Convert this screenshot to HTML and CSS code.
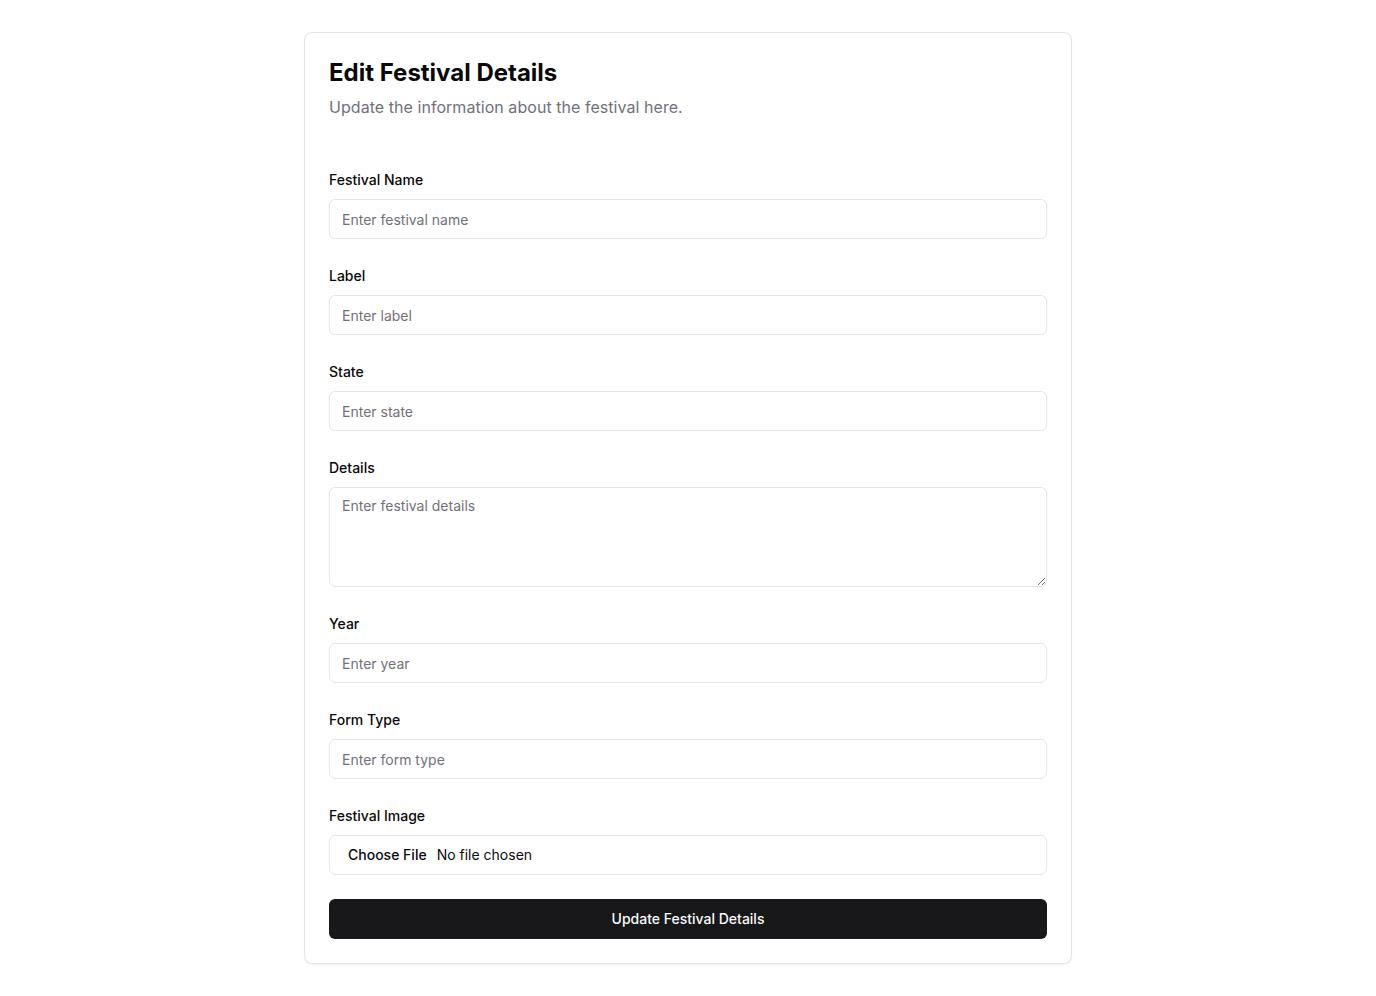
FILE: index.html
```html
<!DOCTYPE html>
<html lang="en">
<head>
<meta charset="utf-8">
<title>Edit Festival Details</title>
<link rel="stylesheet" href="styles.css">
</head>
<body>
<main class="page">
  <section class="card">
    <header class="card-header">
      <h1 class="card-title">Edit Festival Details</h1>
      <p class="card-desc">Update the information about the festival here.</p>
    </header>
    <form class="card-content form">
      <div class="field">
        <label class="label" for="name">Festival Name</label>
        <input class="input" id="name" type="text" placeholder="Enter festival name">
      </div>
      <div class="field">
        <label class="label" for="label">Label</label>
        <input class="input" id="label" type="text" placeholder="Enter label">
      </div>
      <div class="field">
        <label class="label" for="state">State</label>
        <input class="input" id="state" type="text" placeholder="Enter state">
      </div>
      <div class="field">
        <label class="label" for="details">Details</label>
        <textarea class="input textarea" id="details" placeholder="Enter festival details"></textarea>
      </div>
      <div class="field">
        <label class="label" for="year">Year</label>
        <input class="input" id="year" type="text" placeholder="Enter year">
      </div>
      <div class="field">
        <label class="label" for="formtype">Form Type</label>
        <input class="input" id="formtype" type="text" placeholder="Enter form type">
      </div>
      <div class="field">
        <label class="label" for="image">Festival Image</label>
        <input class="input file" id="image" type="file">
      </div>
      <button class="button" type="button">Update Festival Details</button>
    </form>
  </section>
</main>
</body>
</html>
```

FILE: styles.css
```css
* { box-sizing: border-box; }
html, body { margin: 0; padding: 0; background: #ffffff; }
body {
  font-family: Inter, "Liberation Sans", Arial, sans-serif;
  color: #09090b;
}
.page {
  padding: 32px 0;
  display: flex;
  justify-content: center;
}
.card {
  width: 768px;
  border: 1px solid #e4e4e7;
  border-radius: 8px;
  background: #fff;
  box-shadow: 0 1px 2px rgba(0,0,0,0.05);
}
.card-header {
  padding: 24px 24px 24px;
  display: flex;
  flex-direction: column;
  gap: 6px;
}
.card-title {
  margin: 0;
  font-size: 24px;
  line-height: 32px;
  font-weight: 700;
  letter-spacing: 0;
}
.card-desc {
  margin: 0;
  font-size: 16px;
  line-height: 24px;
  color: #71717a;
  letter-spacing: 0.05px;
}
.card-content {
  padding: 27px 24px 24px;
}
.form {
  display: flex;
  flex-direction: column;
  gap: 27px;
}
.field {
  display: flex;
  flex-direction: column;
  gap: 9px;
}
.label {
  font-size: 14px;
  line-height: 20px;
  font-weight: 500;
}
.input {
  height: 40px;
  width: 100%;
  border: 1px solid #e4e4e7;
  border-radius: 6px;
  background: #fff;
  padding: 8px 12px;
  font-family: inherit;
  font-size: 14px;
  line-height: 20px;
  color: #09090b;
  outline: none;
}
.input::placeholder { color: #71717a; }
.textarea {
  height: 100px;
  resize: vertical;
  display: block;
}
.file {
  padding: 0 12px;
  color: #09090b;
  display: flex;
  align-items: center;
  line-height: 38px;
}
.file::file-selector-button {
  border: 0;
  background: transparent;
  font-family: inherit;
  font-size: 14px;
  font-weight: 500;
  color: #09090b;
  padding: 1px 6px;
  margin-right: 4px;
}
.button {
  margin-top: -3px;
  height: 40px;
  width: 100%;
  border: 0;
  border-radius: 6px;
  background: #18181b;
  color: #fafafa;
  font-family: inherit;
  font-size: 14px;
  font-weight: 500;
  line-height: 20px;
  padding: 10px 16px;
  cursor: pointer;
}
```
